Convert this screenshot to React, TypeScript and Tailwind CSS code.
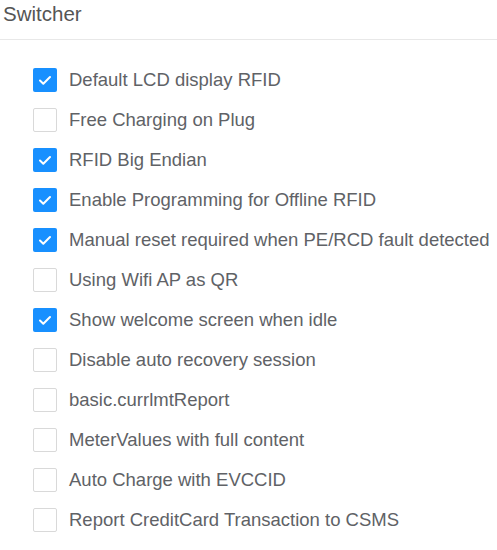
const items: { label: string; checked: boolean }[] = [
  { label: "Default LCD display RFID", checked: true },
  { label: "Free Charging on Plug", checked: false },
  { label: "RFID Big Endian", checked: true },
  { label: "Enable Programming for Offline RFID", checked: true },
  { label: "Manual reset required when PE/RCD fault detected", checked: true },
  { label: "Using Wifi AP as QR", checked: false },
  { label: "Show welcome screen when idle", checked: true },
  { label: "Disable auto recovery session", checked: false },
  { label: "basic.currlmtReport", checked: false },
  { label: "MeterValues with full content", checked: false },
  { label: "Auto Charge with EVCCID", checked: false },
  { label: "Report CreditCard Transaction to CSMS", checked: false },
];

export default function App() {
  return (
    <div className="h-[550px] w-[497px] bg-white font-['Liberation_Sans',Arial,sans-serif]">
      <div className="h-[40px] border-b border-[#e8e8e8] pl-[3px] text-[20.5px] leading-[28px] text-[#555]">
        Switcher
      </div>
      <div className="flex flex-col pt-[20px]">
        {items.map((it) => (
          <label key={it.label} className="flex h-[40px] items-center pl-[33px]">
            {it.checked ? (
              <span className="flex h-[24px] w-[24px] items-center justify-center rounded-[2px] bg-[#1890ff]">
                <svg width="16" height="16" viewBox="0 0 16 16" fill="none">
                  <path d="M3 8.5l3.3 3.2L13 5" stroke="white" strokeWidth="2" strokeLinecap="round" strokeLinejoin="round" />
                </svg>
              </span>
            ) : (
              <span className="h-[24px] w-[24px] rounded-[2px] border border-[#d9d9d9] bg-white" />
            )}
            <span className="ml-[12px] text-[18.5px] text-[#606266]">{it.label}</span>
          </label>
        ))}
      </div>
    </div>
  );
}
